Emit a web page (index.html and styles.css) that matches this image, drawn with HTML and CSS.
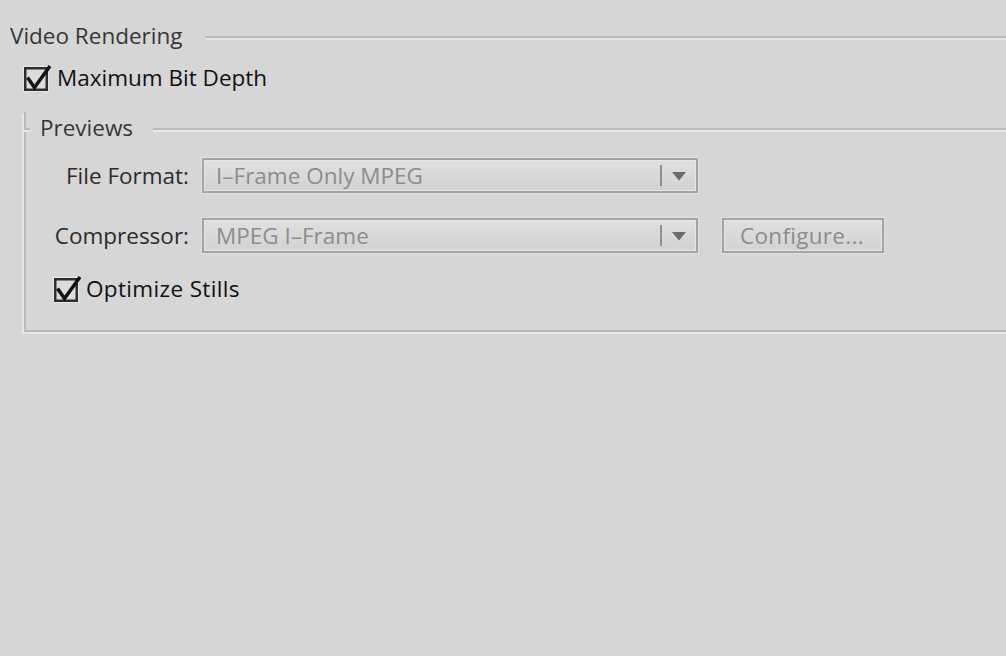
FILE: index.html
```html
<!DOCTYPE html>
<html lang="en">

<head>
  <meta charset="UTF-8">
  <meta name="viewport" content="width=device-width, initial-scale=1.0">
  <title>Video Rendering</title>
  <link rel="stylesheet" href="styles.css">
</head>

<body>
  <div class="pane">
    <!-- Section heading -->
    <div class="section-head">
      <span class="section-title">Video Rendering</span>
      <span class="rule"></span>
    </div>

    <div class="check-row check-row-top">
      <svg class="checkbox" width="30" height="28" viewBox="0 0 30 28" aria-hidden="true">
        <rect x="1.5" y="2.5" width="25" height="25" fill="none" stroke="#e9e9e9" stroke-width="1" />
        <rect x="3.25" y="4.25" width="21.5" height="21.5" fill="#dcdcdc" stroke="#2e2e2e" stroke-width="2.5" />
        <polyline points="5.5,13.5 12.5,23.5 28,2" fill="none" stroke="#111" stroke-width="3.5" />
      </svg>
      <span class="check-label">Maximum Bit Depth</span>
    </div>

    <!-- Previews group box -->
    <div class="group">
      <div class="group-head">
        <span class="tick"></span>
        <span class="group-title">Previews</span>
        <span class="rule"></span>
      </div>

      <div class="field-row field-row-first">
        <span class="field-label">File Format:</span>
        <div class="select">
          <span class="select-value">I&#8211;Frame Only MPEG</span>
          <span class="select-arrow">
            <svg width="14" height="9" viewBox="0 0 14 9" aria-hidden="true">
              <polygon points="0,0 14,0 7,8.5" fill="#6a6a6a" />
            </svg>
          </span>
        </div>
      </div>

      <div class="field-row">
        <span class="field-label">Compressor:</span>
        <div class="select">
          <span class="select-value">MPEG I&#8211;Frame</span>
          <span class="select-arrow">
            <svg width="14" height="9" viewBox="0 0 14 9" aria-hidden="true">
              <polygon points="0,0 14,0 7,8.5" fill="#6a6a6a" />
            </svg>
          </span>
        </div>
        <div class="button">Configure...</div>
      </div>

      <div class="check-row check-row-group">
        <svg class="checkbox" width="30" height="28" viewBox="0 0 30 28" aria-hidden="true">
          <rect x="1.5" y="2.5" width="25" height="25" fill="none" stroke="#e9e9e9" stroke-width="1" />
          <rect x="3.25" y="4.25" width="21.5" height="21.5" fill="#dcdcdc" stroke="#2e2e2e" stroke-width="2.5" />
          <polyline points="5.5,13.5 12.5,23.5 28,2" fill="none" stroke="#111" stroke-width="3.5" />
        </svg>
        <span class="check-label">Optimize Stills</span>
      </div>
    </div>
  </div>
</body>

</html>
```

FILE: styles.css
```css
/* Page */
html,
body {
  margin: 0;
  height: 100%;
  overflow: hidden;
}

body {
  background: #d6d6d6;
  font-family: "Open Sans", "Liberation Sans", sans-serif;
  font-size: 22.5px;
  line-height: 30px;
  color: #2b2b2b;
}

.pane {
  padding-top: 20px;
}

/* Etched divider lines */
.rule {
  flex: 1;
  height: 2px;
  margin-top: 16px;
  background: #bababa;
  border-bottom: 2px solid #e7e7e7;
}

/* Section heading */
.section-head {
  display: flex;
  align-items: flex-start;
  padding-left: 10px;
}

.section-title {
  padding-top: 1px;
  color: #363636;
  margin-right: 22px;
  white-space: nowrap;
}

/* Checkbox rows */
.check-row {
  display: flex;
  align-items: flex-start;
}

.check-row-top {
  margin-top: 11px;
  padding-left: 22px;
}

.check-row-group {
  margin-top: 20px;
  padding-left: 26px;
}

.checkbox {
  flex: none;
  margin-top: 2px;
  margin-right: 5px;
}

.check-row-group .checkbox {
  margin-top: 2px;
  margin-right: 4px;
}

.check-label {
  padding-top: 1px;
  color: #111;
  white-space: nowrap;
}

.check-row-group .check-label {
  letter-spacing: 0.35px;
}

/* Group box */
.group {
  width: 1010px;
  margin-top: 35px;
  margin-left: 24px;
  padding-bottom: 26px;
  border-left: 2px solid #bababa;
  border-bottom: 2px solid #bababa;
  box-shadow: -2px 2px 0 #e7e7e7;
}

.group-head {
  display: flex;
  align-items: flex-start;
  margin-top: -16px;
  margin-left: -2px;
}

.tick {
  width: 6px;
  height: 2px;
  margin-top: 16px;
  background: #bababa;
  border-bottom: 2px solid #e7e7e7;
}

.group-title {
  padding-top: 1px;
  color: #363636;
  margin-left: 10px;
  margin-right: 20px;
}

/* Form rows */
.field-row {
  display: flex;
  align-items: center;
  margin-top: 25px;
}

.field-row-first {
  margin-top: 15px;
}

.field-label {
  width: 163px;
  margin-right: 13px;
  padding-top: 1px;
  text-align: right;
  white-space: nowrap;
}

.select {
  display: flex;
  align-items: center;
  box-sizing: border-box;
  width: 496px;
  height: 35px;
  border: 2px solid #a4a4a4;
  background: linear-gradient(#e0e0e0, #d2d2d2);
  box-shadow: inset 0 0 0 1px #e6e6e6, 0 0 0 1px #e0e0e0;
}

.select-value {
  flex: 1;
  padding-top: 1px;
  padding-left: 12px;
  color: #8c8c8c;
  white-space: nowrap;
}

.select-arrow {
  display: flex;
  align-items: center;
  justify-content: center;
  width: 34px;
  height: 21px;
  border-left: 2px solid #909090;
}

.select-arrow svg {
  margin-top: 2px;
}

.button {
  box-sizing: border-box;
  width: 162px;
  height: 35px;
  margin-left: 24px;
  padding-top: 1px;
  padding-left: 16px;
  border: 2px solid #a4a4a4;
  background: linear-gradient(#e0e0e0, #d2d2d2);
  box-shadow: inset 0 0 0 1px #e6e6e6, 0 0 0 1px #e0e0e0;
  color: #8c8c8c;
  line-height: 29px;
  letter-spacing: 0.3px;
  white-space: nowrap;
}
```
